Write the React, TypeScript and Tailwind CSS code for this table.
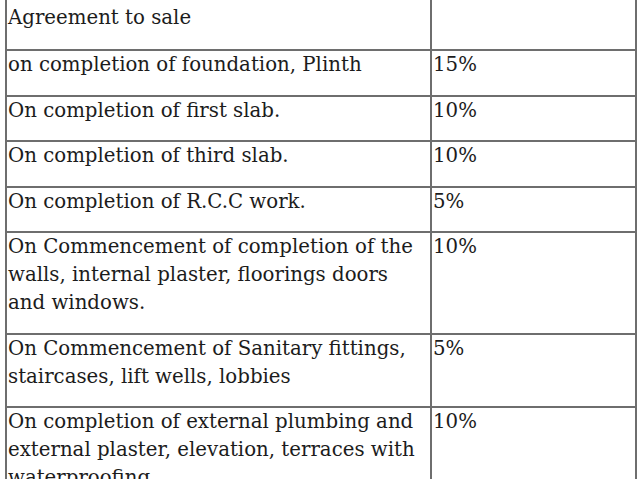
const rows: { lines: string[]; pct: string }[] = [
  { lines: ["On Booking amount / within 30 days of", "Agreement to sale"], pct: "" },
  { lines: ["on completion of foundation, Plinth"], pct: "15%" },
  { lines: ["On completion of first slab."], pct: "10%" },
  { lines: ["On completion of third slab."], pct: "10%" },
  { lines: ["On completion of R.C.C work."], pct: "5%" },
  { lines: ["On Commencement of completion of the", "walls, internal plaster, floorings doors", "and windows."], pct: "10%" },
  { lines: ["On Commencement of Sanitary fittings,", "staircases, lift wells, lobbies"], pct: "5%" },
  { lines: ["On completion of external plumbing and", "external plaster, elevation, terraces with", "waterproofing."], pct: "10%" },
  { lines: ["On completion of lifts, water pumps,", "electrical fittings"], pct: "5%" },
];

export default function App() {
  return (
    <div className="h-[479px] overflow-hidden bg-white">
      <table className="ml-[5px] mt-[-26px] w-[632px] border-collapse text-[19.75px] leading-[28px] text-[#1c1c1c] [font-family:'DejaVu_Serif',serif]">
        <colgroup>
          <col className="w-[425px]" />
          <col />
        </colgroup>
        <tbody>
          {rows.map((r, i) => (
            <tr key={i}>
              <td className={`border-2 border-[#6e6e6e] pl-[1px] pr-1 pt-0 align-top ${i === 0 ? "pb-[17px]" : "pb-[15.5px]"}`}>
                {r.lines.map((l, j) => (
                  <div key={j} className="whitespace-nowrap">{l}</div>
                ))}
              </td>
              <td className="border-2 border-[#6e6e6e] pl-[1px] pt-0 align-top">{r.pct}</td>
            </tr>
          ))}
        </tbody>
      </table>
    </div>
  );
}
